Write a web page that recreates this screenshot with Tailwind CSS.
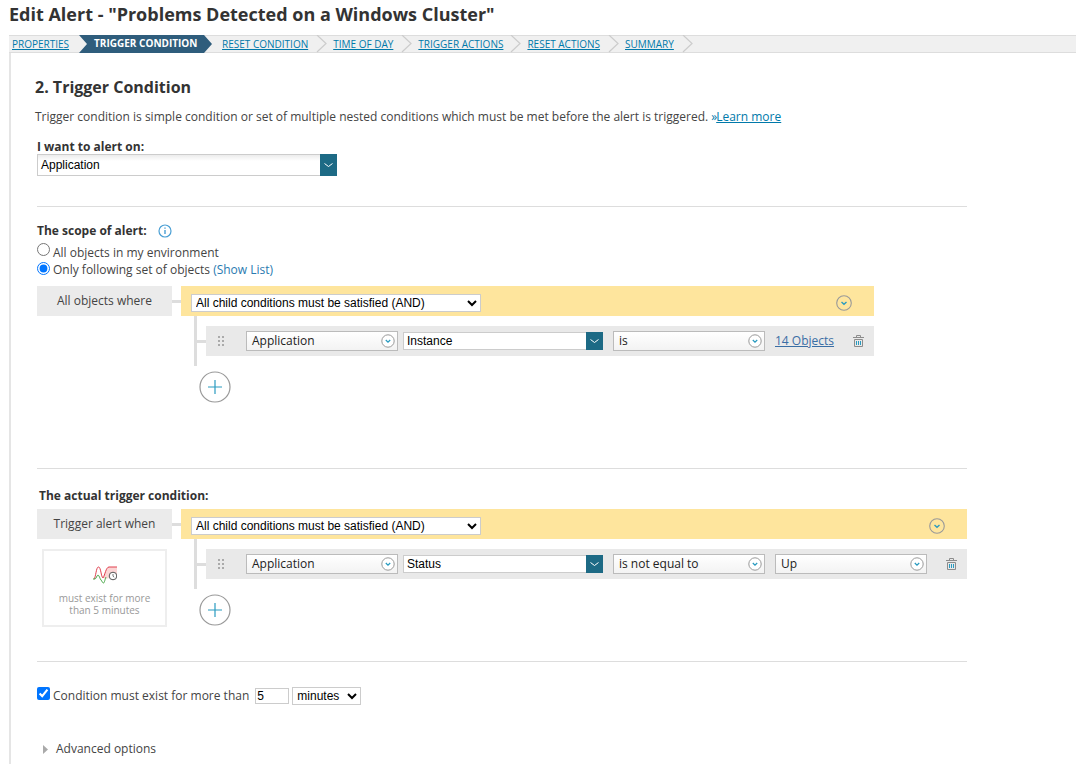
<!DOCTYPE html>
<html lang="en">
  <head>
    <meta charset="UTF-8" />
    <title>Edit Alert</title>
    <script src="https://cdn.jsdelivr.net/npm/@tailwindcss/browser@4"></script>
  </head>

  <body class="bg-white text-[#444] text-[12px] font-['Open_Sans',sans-serif] overflow-hidden h-[764px]">
    <svg class="hidden">
      <symbol id="circle-down" viewBox="0 0 16 16">
        <circle cx="8" cy="8" r="7.3" fill="none" stroke="#999" stroke-width="1.1" />
        <path d="M5.5 7 8 9.3 10.5 7" fill="none" stroke="#2a9bc0" stroke-width="1.4" />
      </symbol>
      <symbol id="drop-down" viewBox="0 0 14 14">
        <circle cx="7" cy="7" r="6.2" fill="#fff" stroke="#999" stroke-width="1" />
        <path d="M4.8 6 7 8.1 9.2 6" fill="none" stroke="#2a9bc0" stroke-width="1.3" />
      </symbol>
      <symbol id="add" viewBox="0 0 32 32">
        <circle cx="16" cy="16" r="15" fill="#fff" stroke="#999" stroke-width="1.2" />
        <path d="M16 9v14M9 16h14" fill="none" stroke="#2a9bc0" stroke-width="1.2" />
      </symbol>
      <symbol id="trash" viewBox="0 0 11 12">
        <path d="M0 2.500h11M3.500 2.500V.5h4v2M1.500 4.500h8v7h-8z" fill="none" stroke="#8c8c8c" stroke-width="1" />
        <path d="M3.500 6v4M5.500 6v4M7.500 6v4" fill="none" stroke="#2a9bc0" stroke-width="1" />
      </symbol>
      <symbol id="grip" viewBox="0 0 6 10">
        <path d="M0 0h2v2H0zM4 0h2v2H4zM0 4h2v2H0zM4 4h2v2H4zM0 8h2v2H0zM4 8h2v2H4z" fill="#aaa" />
      </symbol>
      <symbol id="step" viewBox="0 0 14 18">
        <path d="M1 0l9 8.500L1 17" fill="none" stroke="#ccc" stroke-width="1.200" />
      </symbol>
      <symbol id="mini-down" viewBox="0 0 17 22">
        <path d="M4.500 9.500 8.500 12.500 12.500 9.500" fill="none" stroke="#fff" stroke-width="1" />
      </symbol>
    </svg>

    <h1 class="pl-[9px] text-[18px] leading-[28px] font-bold text-[#333] mb-[7px]">Edit Alert - "Problems Detected on a Windows Cluster"</h1>

    <nav class="ml-[9px] h-[18px] bg-[#f0f0f0] border-y border-[#ddd] flex items-center pb-px text-[10px] leading-[14px] text-[#0079aa]">
      <a class="ml-[3px] underline" href="#">PROPERTIES</a>
      <div class="ml-[10px] h-[18px] w-[133px] relative shrink-0 self-start -mt-px">
        <svg class="absolute top-0 left-0" width="133" height="18" viewBox="0 0 133 18"><path d="M0 0H125L133 9 125 18H0L8 9z" fill="#2f5d7c" /></svg>
        <span class="absolute left-[15px] top-0 leading-[17px] font-bold text-white whitespace-nowrap">TRIGGER CONDITION</span>
      </div>
      <a class="ml-[10px] underline" href="#">RESET CONDITION</a>
      <svg class="ml-[8px] shrink-0 self-start -mt-px" width="14" height="18"><use href="#step" /></svg>
      <a class="ml-[3px] underline" href="#">TIME OF DAY</a>
      <svg class="ml-[8px] shrink-0 self-start -mt-px" width="14" height="18"><use href="#step" /></svg>
      <a class="ml-[3px] underline" href="#">TRIGGER ACTIONS</a>
      <svg class="ml-[7px] shrink-0 self-start -mt-px" width="14" height="18"><use href="#step" /></svg>
      <a class="ml-[3px] underline" href="#">RESET ACTIONS</a>
      <svg class="ml-[8px] shrink-0 self-start -mt-px" width="14" height="18"><use href="#step" /></svg>
      <a class="ml-[3px] underline" href="#">SUMMARY</a>
      <svg class="ml-[8px] shrink-0 self-start -mt-px" width="14" height="18"><use href="#step" /></svg>
    </nav>

    <main class="ml-[9px] border-l-2 border-[#e5e5e5] pl-[26px] h-[711px]">
      <h2 class="-ml-[2px] pt-[23px] text-[16px] leading-[22px] font-bold text-[#333]">2. Trigger Condition</h2>
      <p class="-ml-[2px] mt-[10px] leading-[18px]">Trigger condition is simple condition or set of multiple nested conditions which must be met before the alert is triggered. <span class="text-[#0079aa]">»<a class="-ml-px underline" href="#">Learn more</a></span></p>

      <div class="mt-[13px] leading-[15px] font-bold text-[#333]">I want to alert on:</div>
      <div class="w-[300px] h-[22px] flex border border-[#ccc] border-r-0 bg-linear-to-b from-[#ececec] to-white to-30% font-['Liberation_Sans',sans-serif] text-black">
        <span class="flex-1 pl-[3px] leading-[20px]">Application</span>
        <svg class="-my-px bg-[#1d6a85] shrink-0" width="17" height="22"><use href="#mini-down" /></svg>
      </div>

      <div class="mt-[30px] w-[930px] h-px bg-[#ddd]"></div>

      <div class="mt-[16px] h-[15px] flex items-center leading-[15px]">
        <span class="font-bold text-[#333]">The scope of alert:</span>
        <svg class="ml-[11px]" width="14" height="14" viewBox="0 0 14 14"><circle cx="7" cy="7" r="6" fill="none" stroke="#4a9fd4" stroke-width="1.200" /><path d="M7 6v4M7 3.500v1.200" stroke="#4a9fd4" stroke-width="1.400" /></svg>
      </div>
      <label class="mt-[5px] h-[17px] flex items-center"><input type="radio" name="scope" class="m-0 -mt-[4px] w-[13px] h-[13px]" /><span class="ml-[3px] mt-[2px]">All objects in my environment</span></label>
      <label class="h-[17px] flex items-center"><input type="radio" name="scope" checked class="m-0 w-[13px] h-[13px]" /><span class="ml-[3px] mt-[2px]">Only following set of objects <a class="text-[#2a7ab0]" href="#">(Show List)</a></span></label>

      <section class="mt-[9px] w-[837px] flex">
        <div class="w-[135px] h-[30px] shrink-0 bg-[#ebebeb] text-center leading-[29px]">All objects where</div>
        <div class="w-[9px] h-[3px] mt-[14px] shrink-0 bg-[#ddd]"></div>
        <div class="flex-1">
          <div class="h-[30px] bg-[#fee59d] flex items-center pl-[10px] pt-[4px]">
            <select class="w-[290px] h-[18px] bg-white border border-[#ccc] font-['Liberation_Sans',sans-serif] text-black"><option>All child conditions must be satisfied (AND)</option></select>
            <svg class="ml-auto mr-[22px]" width="16" height="16"><use href="#circle-down" /></svg>
          </div>
          <div class="flex h-[50px] ml-[13px]">
            <div class="w-[3px] h-[50px] bg-[#ddd]"></div>
            <div class="w-[9px] h-[3px] mt-[24px] bg-[#ddd]"></div>
            <div class="flex-1 mt-[10px] h-[30px] bg-[#e9e9e9] flex items-center pr-[10px]">
              <svg class="ml-[12px] mr-[22px]" width="6" height="10"><use href="#grip" /></svg>
              <div class="w-[152px] h-[20px] border border-[#bbb] bg-linear-to-b from-white to-[#f3f3f3] flex items-center pl-[5px] pr-[2px] text-[#222]"><span class="flex-1">Application</span><svg width="14" height="14"><use href="#drop-down" /></svg></div>
              <div class="ml-[5px] w-[200px] h-[18px] flex border border-[#ccc] border-r-0 bg-white font-['Liberation_Sans',sans-serif] text-black"><span class="flex-1 pl-[3px] leading-[16px]">Instance</span><svg class="-my-px bg-[#1d6a85] shrink-0" width="17" height="18" viewBox="0 2 17 18"><use href="#mini-down" width="17" height="22" /></svg></div>
              <div class="ml-[10px] w-[152px] h-[20px] border border-[#bbb] bg-linear-to-b from-white to-[#f3f3f3] flex items-center pl-[5px] pr-[2px] text-[#222]"><span class="flex-1">is</span><svg width="14" height="14"><use href="#drop-down" /></svg></div>
              <a class="ml-[10px] underline text-[#3a6ea5]" href="#">14 Objects</a>
              <svg class="ml-auto" width="11" height="12"><use href="#trash" /></svg>
            </div>
          </div>
          <svg class="ml-[18px] mt-[5px] block" width="32" height="32"><use href="#add" /></svg>
        </div>
      </section>

      <div class="mt-[65px] w-[930px] h-px bg-[#ddd]"></div>

      <div class="mt-[19px] ml-[2px] leading-[15px] font-bold text-[#333]">The actual trigger condition:</div>

      <section class="mt-[6px] w-[930px] flex">
        <div class="w-[135px] shrink-0">
          <div class="h-[30px] bg-[#ebebeb] text-center leading-[30px]">Trigger alert when</div>
          <div class="mt-[10px] ml-[5px] w-[125px] h-[78px] border-2 border-[#eee] flex flex-col items-center text-[10px] leading-[12px] text-[#999] pt-[15px]">
            <svg width="24" height="18" viewBox="0 0 24 18">
              <path d="M10 12C12 8 13 1 16 1h8v8l-5 2-6 2z" fill="#fbd5d5" />
              <path d="M1 13C3 11 3 1 5.500 1S8 11 10 12C12 9 13 1 16 1h8" fill="none" stroke="#e0404f" stroke-width="1" />
              <path d="M0 13h2c1 0 2-4 3-4s2 4 3 5 1.500 3 2.500 3S12 13 13 11" fill="none" stroke="#4aa84a" stroke-width="1" />
              <circle cx="20" cy="10" r="3.800" fill="#fff" stroke="#555" stroke-width="1" />
              <path d="M20 8v2.200l1.200 1" fill="none" stroke="#555" stroke-width=".8" />
            </svg>
            <span class="mt-[8px]">must exist for more</span>
            <span>than 5 minutes</span>
          </div>
        </div>
        <div class="w-[9px] h-[3px] mt-[14px] shrink-0 bg-[#ddd]"></div>
        <div class="flex-1">
          <div class="h-[30px] bg-[#fee59d] flex items-center pl-[10px] pt-[4px]">
            <select class="w-[290px] h-[18px] bg-white border border-[#ccc] font-['Liberation_Sans',sans-serif] text-black"><option>All child conditions must be satisfied (AND)</option></select>
            <svg class="ml-auto mr-[22px]" width="16" height="16"><use href="#circle-down" /></svg>
          </div>
          <div class="flex h-[50px] ml-[13px]">
            <div class="w-[3px] h-[50px] bg-[#ddd]"></div>
            <div class="w-[9px] h-[3px] mt-[24px] bg-[#ddd]"></div>
            <div class="flex-1 mt-[10px] h-[30px] bg-[#e9e9e9] flex items-center pr-[10px]">
              <svg class="ml-[12px] mr-[22px]" width="6" height="10"><use href="#grip" /></svg>
              <div class="w-[152px] h-[20px] border border-[#bbb] bg-linear-to-b from-white to-[#f3f3f3] flex items-center pl-[5px] pr-[2px] text-[#222]"><span class="flex-1">Application</span><svg width="14" height="14"><use href="#drop-down" /></svg></div>
              <div class="ml-[5px] w-[200px] h-[18px] flex border border-[#ccc] border-r-0 bg-white font-['Liberation_Sans',sans-serif] text-black"><span class="flex-1 pl-[3px] leading-[16px]">Status</span><svg class="-my-px bg-[#1d6a85] shrink-0" width="17" height="18" viewBox="0 2 17 18"><use href="#mini-down" width="17" height="22" /></svg></div>
              <div class="ml-[10px] w-[152px] h-[20px] border border-[#bbb] bg-linear-to-b from-white to-[#f3f3f3] flex items-center pl-[5px] pr-[2px] text-[#222]"><span class="flex-1">is not equal to</span><svg width="14" height="14"><use href="#drop-down" /></svg></div>
              <div class="ml-[10px] w-[152px] h-[20px] border border-[#bbb] bg-linear-to-b from-white to-[#f3f3f3] flex items-center pl-[5px] pr-[2px] text-[#222]"><span class="flex-1">Up</span><svg width="14" height="14"><use href="#drop-down" /></svg></div>
              <svg class="ml-auto" width="11" height="12"><use href="#trash" /></svg>
            </div>
          </div>
          <svg class="ml-[18px] mt-[5px] block" width="32" height="32"><use href="#add" /></svg>
        </div>
      </section>

      <div class="mt-[34px] w-[930px] h-px bg-[#ddd]"></div>

      <div class="mt-[25px] h-[18px] flex items-center">
        <input type="checkbox" checked class="m-0 w-[13px] h-[13px] self-start" />
        <span class="ml-[3px]">Condition must exist for more than</span>
        <input type="text" value="5" class="ml-[6px] w-[34px] h-[16px] border border-[#ccc] pl-[1px] font-['Liberation_Sans',sans-serif] text-black" />
        <select class="ml-[3px] w-[69px] h-[18px] bg-white border border-[#ccc] font-['Liberation_Sans',sans-serif] text-black"><option>minutes</option></select>
      </div>

      <div class="mt-[36px] ml-[6px] flex items-center leading-[16px]">
        <svg width="5" height="9" viewBox="0 0 5 9"><path d="M0 0l5 4.500L0 9z" fill="#aaa" /></svg>
        <span class="ml-[8px]">Advanced options</span>
      </div>
    </main>
  </body>
</html>
